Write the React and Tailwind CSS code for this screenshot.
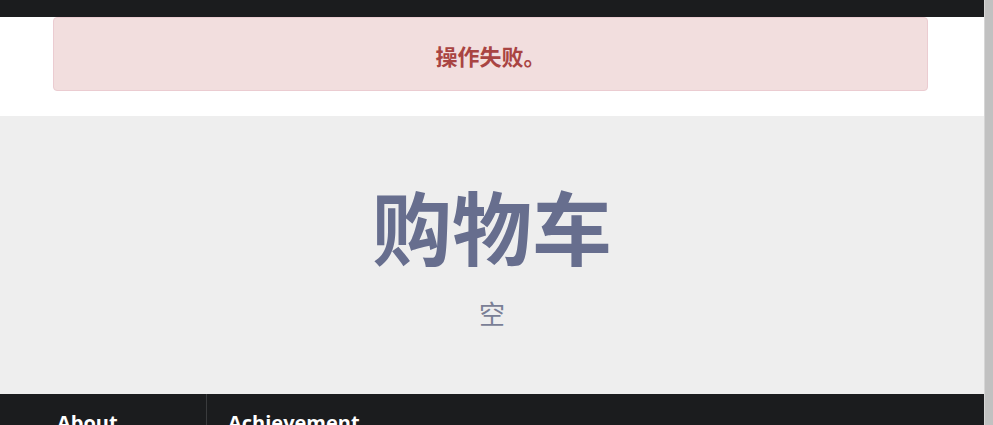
export default function App() {
  return (
    <div className="flex w-[993px] h-[425px] overflow-hidden bg-white">
      <div className="flex-1 flex flex-col font-['Open_Sans','Noto_Sans_CJK_SC',sans-serif]">
        <div className="shrink-0 h-[17px] bg-[#1b1c1e]" />

        <div className="shrink-0 bg-white pl-[53px] pr-[56px] pb-[25px]">
          <div className="h-[74px] flex items-center justify-center rounded-[4px] border border-[#ebccd1] bg-[#f2dede]">
            <span className="mt-[3px] text-[22px] font-bold text-[#a94442] font-['Noto_Sans_CJK_SC',sans-serif]">
              操作失败。
            </span>
          </div>
        </div>

        <div className="shrink-0 h-[278px] bg-[#eeeeee] flex flex-col items-center pt-[58px]">
          <h1 className="text-[80px] leading-[100px] font-bold text-[#676e8e] font-['Noto_Sans_CJK_SC',sans-serif]">
            购物车
          </h1>
          <p className="mt-[23px] text-[26px] leading-[32px] text-[#7a7f96] font-['Noto_Sans_CJK_SC',sans-serif]">
            空
          </p>
        </div>

        <div className="flex-1 shrink-0 bg-[#1b1c1e] flex">
          <div className="w-[207px] border-r border-[#3a3b3d] pl-[57px] pt-[14px]">
            <span className="text-[20px] font-bold text-white">About</span>
          </div>
          <div className="pl-[21px] pt-[14px]">
            <span className="text-[20px] font-bold text-white">Achievement</span>
          </div>
        </div>
      </div>

      <div className="w-[9px] bg-[#c1c1c1] border-l border-[#d6d6d6]" />
    </div>
  );
}
